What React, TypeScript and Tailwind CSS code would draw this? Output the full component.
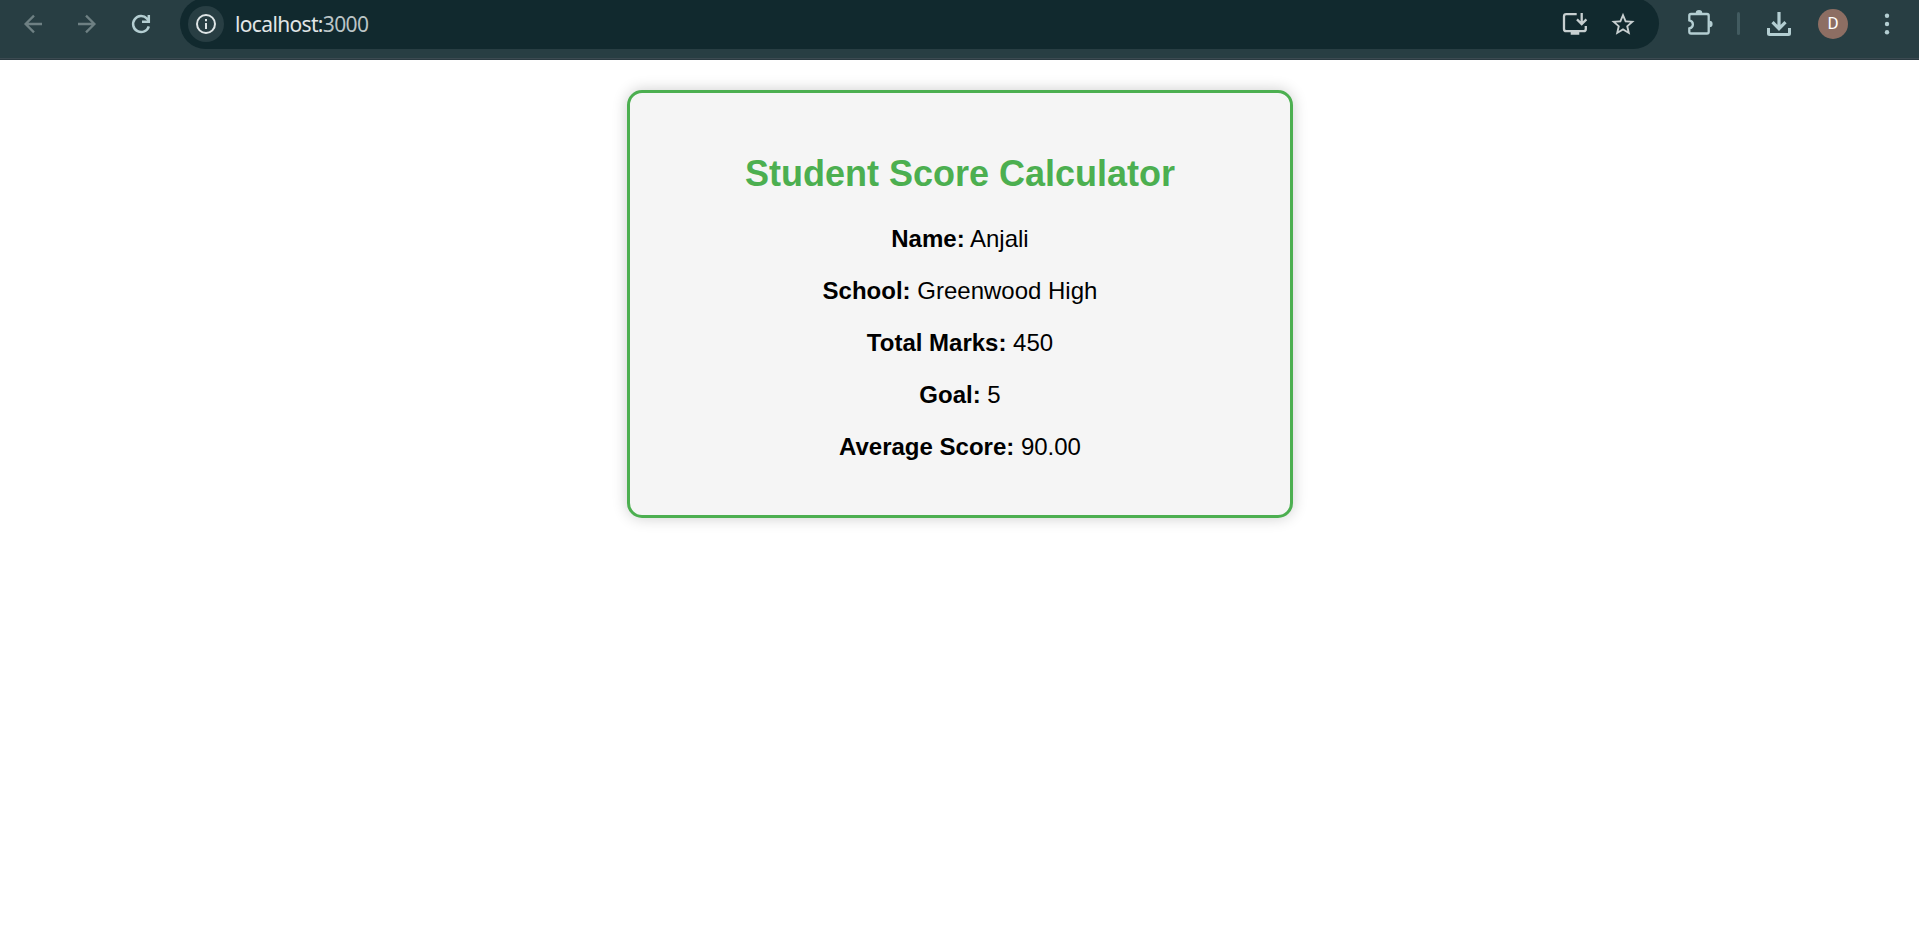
import type { ReactNode } from "react";

const student = {
  name: "Anjali",
  school: "Greenwood High",
  total: 450,
  goal: 5,
};

function Icon({ className = "", children }: { className?: string; children: ReactNode }) {
  return (
    <svg
      viewBox="0 0 36 36"
      fill="none"
      stroke="currentColor"
      strokeWidth="2.3"
      className={`size-9 shrink-0 ${className}`}
      aria-hidden="true"
    >
      {children}
    </svg>
  );
}

function Toolbar() {
  return (
    <header className="flex h-15 items-start overflow-hidden border-b border-[#2b3a41] bg-[#283e43] text-[#b4ced2] shadow-[inset_0_-1px_0_#3c4a51]">
      <Icon className="mt-1.5 ml-[15px] text-[#6e8083]">
        <path d="M27 18H10.5M19 9.6 10.6 18l8.4 8.4" />
      </Icon>
      <Icon className="mt-1.5 ml-[18px] text-[#6e8083]">
        <path d="M9 18h16.5M17 9.6 25.4 18 17 26.4" />
      </Icon>
      <Icon className="mt-1.5 ml-[18px]">
        <path d="M25.8 20.3A8 8 0 1 1 24 12.6L26 15" strokeWidth="2.5" />
        <path d="M25.8 9v6.8H19" strokeWidth="2.5" />
      </Icon>

      <div className="-mt-0.5 ml-[21px] flex h-[51px] w-[1479px] shrink-0 items-start rounded-full bg-[#11292e] pt-2">
        <div className="ml-2 flex size-9 items-center justify-center rounded-full bg-[#283e43] text-[#dfe5e6]">
          <Icon>
            <circle cx="18" cy="18" r="9" strokeWidth="2" />
            <path d="M18 17v6M18 13v2.2" strokeWidth="2" />
          </Icon>
        </div>
        <span className="ml-[11px] flex-1 font-['Noto_Sans',sans-serif] text-[21px] leading-9 tracking-[-0.65px] text-[#e1e6e7]">
          localhost:<span className="text-[#bbc4c6]">3000</span>
        </span>
        <Icon className="mr-3 text-[#c7cfd0]">
          <path d="M19.7 8.2H9.2Q7 8.2 7 10.4v12.6Q7 25.2 9.2 25.2h17.4Q28.8 25.2 28.8 23V20" />
          <path d="M24.7 7v10.5M20 13.4l4.7 4.7 4.7-4.7" />
          <path d="M13.7 25.5h8.6v3.2h-8.6z" fill="currentColor" stroke="none" />
        </Icon>
        <Icon className="mr-[18px] text-[#c7cfd0]">
          <path
            transform="translate(4.08 4.4) scale(1.16)"
            fill="currentColor"
            stroke="none"
            d="M22 9.24l-7.19-.62L12 2 9.19 8.63 2 9.24l5.46 4.73L5.82 21 12 17.27 18.18 21l-1.63-7.03L22 9.24zM12 15.4l-3.76 2.27 1-4.28-3.32-2.88 4.38-.38L12 6.1l1.71 4.04 4.38.38-3.32 2.88 1 4.28L12 15.4z"
          />
        </Icon>
      </div>

      <Icon className="mt-1.5 ml-[23px]">
        <path d="M9 8h16q1.7 0 1.7 1.7v16.1q0 1.7-1.7 1.7H9q-1.7 0-1.7-1.7v-3.4c4.8-1.2 4.8-6.8 0-8V9.700Q7.300 8 9 8z" />
        <path d="M13.7 7.400a3.300 3.300 0 0 1 6.600 0zM27.400 14.800a3.200 3.200 0 0 1 0 6.400z" fill="currentColor" stroke="none" />
      </Icon>
      <span className="mt-3 ml-[19px] h-[23px] w-[3px] shrink-0 rounded-full bg-[#425b60]" />
      <Icon className="mt-1.5 ml-[21px]">
        <path d="M18 6v16M11.5 16.2 18 22.7l6.5-6.5" strokeWidth="3.2" />
        <path d="M7.5 22v5.5q0 1 1 1h19q1 0 1-1V22" strokeWidth="3" />
      </Icon>
      <span className="mt-[9px] ml-[21px] flex size-[30px] shrink-0 items-center justify-center rounded-full bg-[#8d6e63] font-[Roboto,sans-serif] text-[17px] text-white">
        D
      </span>
      <Icon className="mt-1.5 ml-[21px]">
        <g fill="currentColor" stroke="none">
          <circle cx="18" cy="9.7" r="2.2" />
          <circle cx="18" cy="18" r="2.2" />
          <circle cx="18" cy="26.3" r="2.2" />
        </g>
      </Icon>
    </header>
  );
}

function Field({ label, children }: { label: string; children: ReactNode }) {
  return (
    <p>
      <strong>{label}:</strong> {children}
    </p>
  );
}

export default function App() {
  return (
    <div className="min-h-screen bg-white">
      <Toolbar />
      <main className="mx-auto mt-[30px] h-[428px] w-[666px] rounded-[15px] border-3 border-[#4caf50] bg-[#f5f5f5] pt-[60px] pr-[30px] pl-[31px] text-center font-['Liberation_Sans',Arial,sans-serif] text-[24px] leading-7 text-black shadow-[0_0_15px_rgba(0,0,0,0.2)]">
        <h1 className="text-[36px] leading-[41px] font-bold text-[#4caf50]">Student Score Calculator</h1>
        <div className="mt-[31px] flex flex-col gap-6">
          <Field label="Name">{student.name}</Field>
          <Field label="School">{student.school}</Field>
          <Field label="Total Marks">{student.total}</Field>
          <Field label="Goal">{student.goal}</Field>
          <Field label="Average Score">{(student.total / student.goal).toFixed(2)}</Field>
        </div>
      </main>
    </div>
  );
}
